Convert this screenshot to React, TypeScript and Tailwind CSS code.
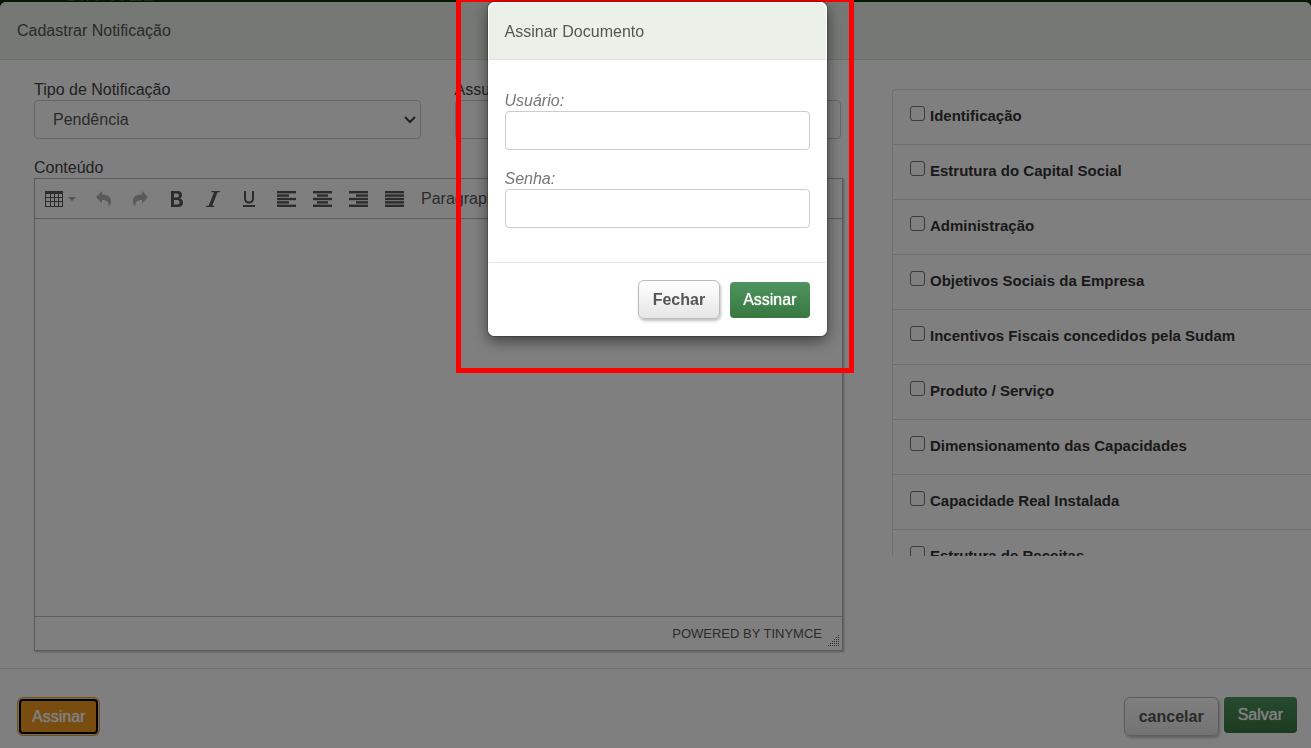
import {useState} from "react";
import type {ReactNode} from "react";
import clsx from "clsx";

const SECTIONS = [
  "Identificação",
  "Estrutura do Capital Social",
  "Administração",
  "Objetivos Sociais da Empresa",
  "Incentivos Fiscais concedidos pela Sudam",
  "Produto / Serviço",
  "Dimensionamento das Capacidades",
  "Capacidade Real Instalada",
  "Estrutura de Receitas",
];

const FIELD = "block h-[39px] w-full rounded border border-[#ccc] bg-white text-base text-[#555] outline-none";
const LABEL = "block h-[21px] text-base leading-[22px]";
const LIGHT_BUTTON =
  "h-[39px] rounded-md border border-[#bbb] bg-linear-to-b from-white to-[#e6e6e6] text-base font-bold text-[#555] shadow-[1px_2px_3px_rgba(0,0,0,0.25)]";
const GREEN_BUTTON =
  "rounded bg-linear-to-b from-[#4f9460] to-[#37783f] text-base text-white [text-shadow:0_0_1px_#fff]";

function ToolButton({label, disabled, children}: {label: string; disabled?: boolean; children: ReactNode}) {
  return (
    <button
      type="button"
      aria-label={label}
      disabled={disabled}
      className={clsx("flex h-full w-9 items-center justify-center", disabled ? "text-[#b4b4b4]" : "text-[#595959]")}
    >
      {children}
    </button>
  );
}

// Each line is [x, width] on an 18px wide grid
function AlignIcon({lines}: {lines: number[][]}) {
  return (
    <svg width="19" height="16" viewBox="0 0 19 16" fill="currentColor">
      {lines.map(([x, w], i) => (
        <rect key={i} x={x} y={i * 3.4} width={w} height="2.400" />
      ))}
    </svg>
  );
}

function Toolbar() {
  return (
    <div className="flex h-10 gap-px overflow-hidden border-b border-[#b8b8b8]">
      <button type="button" aria-label="Tabela" className="flex w-[50px] shrink-0 items-center gap-[5px] pl-[10px] text-[#595959]">
        <svg width="18" height="16" viewBox="0 0 18 16" shapeRendering="crispEdges">
          <path
            fill="currentColor"
            fillRule="evenodd"
            d="M0 0h18v16H0zM1 3h4v3H1zM6 3h3v3H6zM10 3h3v3h-3zM14 3h3v3h-3zM1 7h4v3H1zM6 7h3v3H6zM10 7h3v3h-3zM14 7h3v3h-3zM1 11h4v4H1zM6 11h3v4H6zM10 11h3v4h-3zM14 11h3v4h-3z"
          />
        </svg>
        <svg width="8" height="4" viewBox="0 0 8 4" fill="#a0a4a8">
          <path d="M0 0h8L4 4z" />
        </svg>
      </button>
      <div className="flex">
        <ToolButton label="Desfazer" disabled>
          <svg width="16" height="16" viewBox="0 0 16 16" fill="currentColor">
            <path d="M6 0v3.4c5.500 0 9 2 9 6.600 0 2.500-.9 4.600-2.500 6 .9-4.800-1.500-7-6.500-7v3.500L0 6z" />
          </svg>
        </ToolButton>
        <ToolButton label="Refazer" disabled>
          <svg width="16" height="16" viewBox="0 0 16 16" fill="currentColor">
            <path d="M10 0v3.400c-5.500 0-9 2-9 6.600 0 2.500.9 4.600 2.500 6-.9-4.800 1.500-7 6.500-7v3.500L16 6z" />
          </svg>
        </ToolButton>
      </div>
      <div className="flex">
        <ToolButton label="Negrito">
          <svg width="14" height="16" viewBox="0 0 14 16" fill="currentColor">
            <path
              fillRule="evenodd"
              d="M1 0h6.500C10.500 0 12 1.600 12 4c0 1.600-.7 2.800-2 3.400 1.800.5 3 1.900 3 4 0 2.900-1.900 4.600-5 4.600H1zM4 2.500v4h2.600c1.600 0 2.300-.7 2.300-2s-.7-2-2.300-2zM4 9v4.500h3c1.700 0 2.600-.8 2.600-2.200S8.700 9 7 9z"
            />
          </svg>
        </ToolButton>
        <ToolButton label="Itálico">
          <svg width="14" height="16" viewBox="0 0 14 16" fill="currentColor">
            <path d="M5.500 0H14l-.3 1.200h-2.200L6.300 14.800h2.200L8.200 16H0l.3-1.200h2.400L8 1.200H5.200z" />
          </svg>
        </ToolButton>
        <ToolButton label="Sublinhado">
          <svg width="14" height="16" viewBox="0 0 14 16" fill="currentColor">
            <path d="M1 14h12v2H1zM2 0h2v7.500c0 2 1.100 3 3 3s3-1 3-3V0h2v7.500c0 3-1.900 5-5 5s-5-2-5-5z" />
          </svg>
        </ToolButton>
      </div>
      <div className="flex">
        <ToolButton label="Alinhar à esquerda">
          <AlignIcon lines={[[0, 19], [0, 12], [0, 19], [0, 12], [0, 19]]} />
        </ToolButton>
        <ToolButton label="Centralizar">
          <AlignIcon lines={[[0, 19], [4, 11], [0, 19], [4, 11], [0, 19]]} />
        </ToolButton>
        <ToolButton label="Alinhar à direita">
          <AlignIcon lines={[[0, 19], [7, 12], [0, 19], [7, 12], [0, 19]]} />
        </ToolButton>
        <ToolButton label="Justificar">
          <AlignIcon lines={[[0, 19], [0, 19], [0, 19], [0, 19], [0, 19]]} />
        </ToolButton>
      </div>
      <button type="button" className="px-2 text-base text-[#595959]">
        Paragraph
      </button>
    </div>
  );
}

function Editor() {
  return (
    <div className="border border-[#b8b8b8] shadow-[1px_1px_2px_rgba(0,0,0,0.3)]">
      <Toolbar />
      <textarea id="conteudo" className="block h-[397px] w-full resize-none p-2 outline-none" />
      <div className="flex h-[34px] items-center justify-end border-t border-[#b8b8b8] pr-[3px] text-[13px] text-[#595959]">
        <span>POWERED BY TINYMCE</span>
        <svg className="mb-1 ml-[6px] self-end" width="11" height="11" viewBox="0 0 11 11" fill="#666" shapeRendering="crispEdges">
          {[0, 1, 2, 3, 4, 5].map((row) =>
            Array.from({length: row + 1}, (_, i) => (
              <rect key={row + "-" + i} x={10 - i * 2} y={row * 2} width="1" height="1" />
            ))
          )}
        </svg>
      </div>
    </div>
  );
}

function SectionList() {
  return (
    <ul className="h-[467px] overflow-hidden rounded-tl border-t border-l border-[#ddd]">
      {SECTIONS.map((section) => (
        <li key={section} className="h-[55px] border-b border-[#ddd] pt-4 pl-[17px]">
          <label className="flex items-start gap-[5px] text-[15px] leading-5 font-bold whitespace-nowrap text-[#333]">
            <input type="checkbox" className="size-[15px] shrink-0 appearance-none rounded-[3px] border border-[#767676] bg-white checked:bg-[#37783f]" />
            {section}
          </label>
        </li>
      ))}
    </ul>
  );
}

function SignDialog() {
  const [user, setUser] = useState("");
  const [password, setPassword] = useState("");

  return (
    <div
      role="dialog"
      aria-labelledby="assinar-titulo"
      className="rounded-md border border-white bg-white shadow-[0_5px_15px_rgba(0,0,0,0.5),0_0_2px_rgba(0,0,0,0.7)]"
    >
      <div className="flex h-[57px] items-center rounded-t-lg border-b border-[#e0e3de] bg-[#ebf0e8] px-4 pt-px">
        <h2 id="assinar-titulo" className="text-base text-[#555]">Assinar Documento</h2>
      </div>
      <div className="space-y-[18px] px-4 pt-[30px] pb-[34px] text-[#777]">
        <div>
          <label htmlFor="usuario" className={clsx(LABEL, "italic")}>Usuário:</label>
          <input id="usuario" type="text" value={user} onChange={(e) => setUser(e.target.value)} className={clsx(FIELD, "px-3")} />
        </div>
        <div>
          <label htmlFor="senha" className={clsx(LABEL, "italic")}>Senha:</label>
          <input id="senha" type="password" value={password} onChange={(e) => setPassword(e.target.value)} className={clsx(FIELD, "px-3")} />
        </div>
      </div>
      <div className="flex items-center justify-end gap-[10px] border-t border-[#e5e5e5] px-4 pt-[17px] pb-4">
        <button type="button" className={clsx(LIGHT_BUTTON, "px-[14px]")}>Fechar</button>
        <button type="button" className={clsx(GREEN_BUTTON, "h-9 px-[13px]")}>Assinar</button>
      </div>
    </div>
  );
}

export default function App() {
  return (
    <div className="min-h-screen overflow-hidden bg-[#003008] font-['Liberation_Sans',Arial,sans-serif] text-[#444]">
      <div className="flex h-[2px] items-end overflow-hidden pl-16 text-[22px] leading-4 text-[#4a5a3a]">SIN WEB</div>

      <main className="min-h-[calc(100vh-2px)] rounded-t-md bg-white">
        <header className="flex h-[58px] items-center rounded-t-md border-b border-[#dcdfd9] bg-[#ebf0e8] px-[17px] pt-px">
          <h1 className="text-base text-[#555]">Cadastrar Notificação</h1>
        </header>

        <div className="grid grid-cols-[809fr_419fr] gap-[49px] pb-[17px] pl-[34px]">
          <div className="min-w-0 pt-[19px]">
            <div className="grid grid-cols-2 gap-[34px] pr-[2px]">
              <div>
                <label htmlFor="tipo" className={LABEL}>Tipo de Notificação</label>
                <div className="relative">
                  <select id="tipo" className={clsx(FIELD, "appearance-none px-[18px]")}>
                    <option>Pendência</option>
                  </select>
                  <svg className="pointer-events-none absolute top-4 right-[5px]" width="12" height="8" viewBox="0 0 12 8" fill="none" stroke="#444" strokeWidth="2">
                    <path d="M1 1l5 5 5-5" />
                  </svg>
                </div>
              </div>
              <div>
                <label htmlFor="assunto" className={LABEL}>Assunto</label>
                <input id="assunto" type="text" className={clsx(FIELD, "px-[18px]")} />
              </div>
            </div>
            <div className="mt-[18px]">
              <label htmlFor="conteudo" className={LABEL}>Conteúdo</label>
              <Editor />
            </div>
          </div>
          <div className="min-w-0 pt-[29px]">
            <SectionList />
          </div>
        </div>

        <footer className="flex items-start justify-between border-t border-[#dcdcdc] pt-7 pr-[14px] pb-3 pl-[17px]">
          <button
            type="button"
            className="m-[2px] h-[35px] rounded border-2 border-black bg-[#f29b1f] px-[11px] text-base text-white shadow-[0_0_0_1px_#ddd,0_0_0_2px_#f29b1f] [text-shadow:0_0_1px_#fff]"
          >
            Assinar
          </button>
          <div className="flex items-start gap-[5px]">
            <button type="button" className={clsx(LIGHT_BUTTON, "px-[14px]")}>cancelar</button>
            <button type="button" className={clsx(GREEN_BUTTON, "h-9 px-[14px]")}>Salvar</button>
          </div>
        </footer>
      </main>

      <div className="fixed inset-0 flex items-start justify-center bg-black/50 pr-[2px]">
        {/* highlighted area around the dialog */}
        <div className="w-full max-w-[398px] border-[5px] border-t-2 border-[#f00] pr-[22px] pb-8 pl-[27px]">
          <SignDialog />
        </div>
      </div>
    </div>
  );
}
